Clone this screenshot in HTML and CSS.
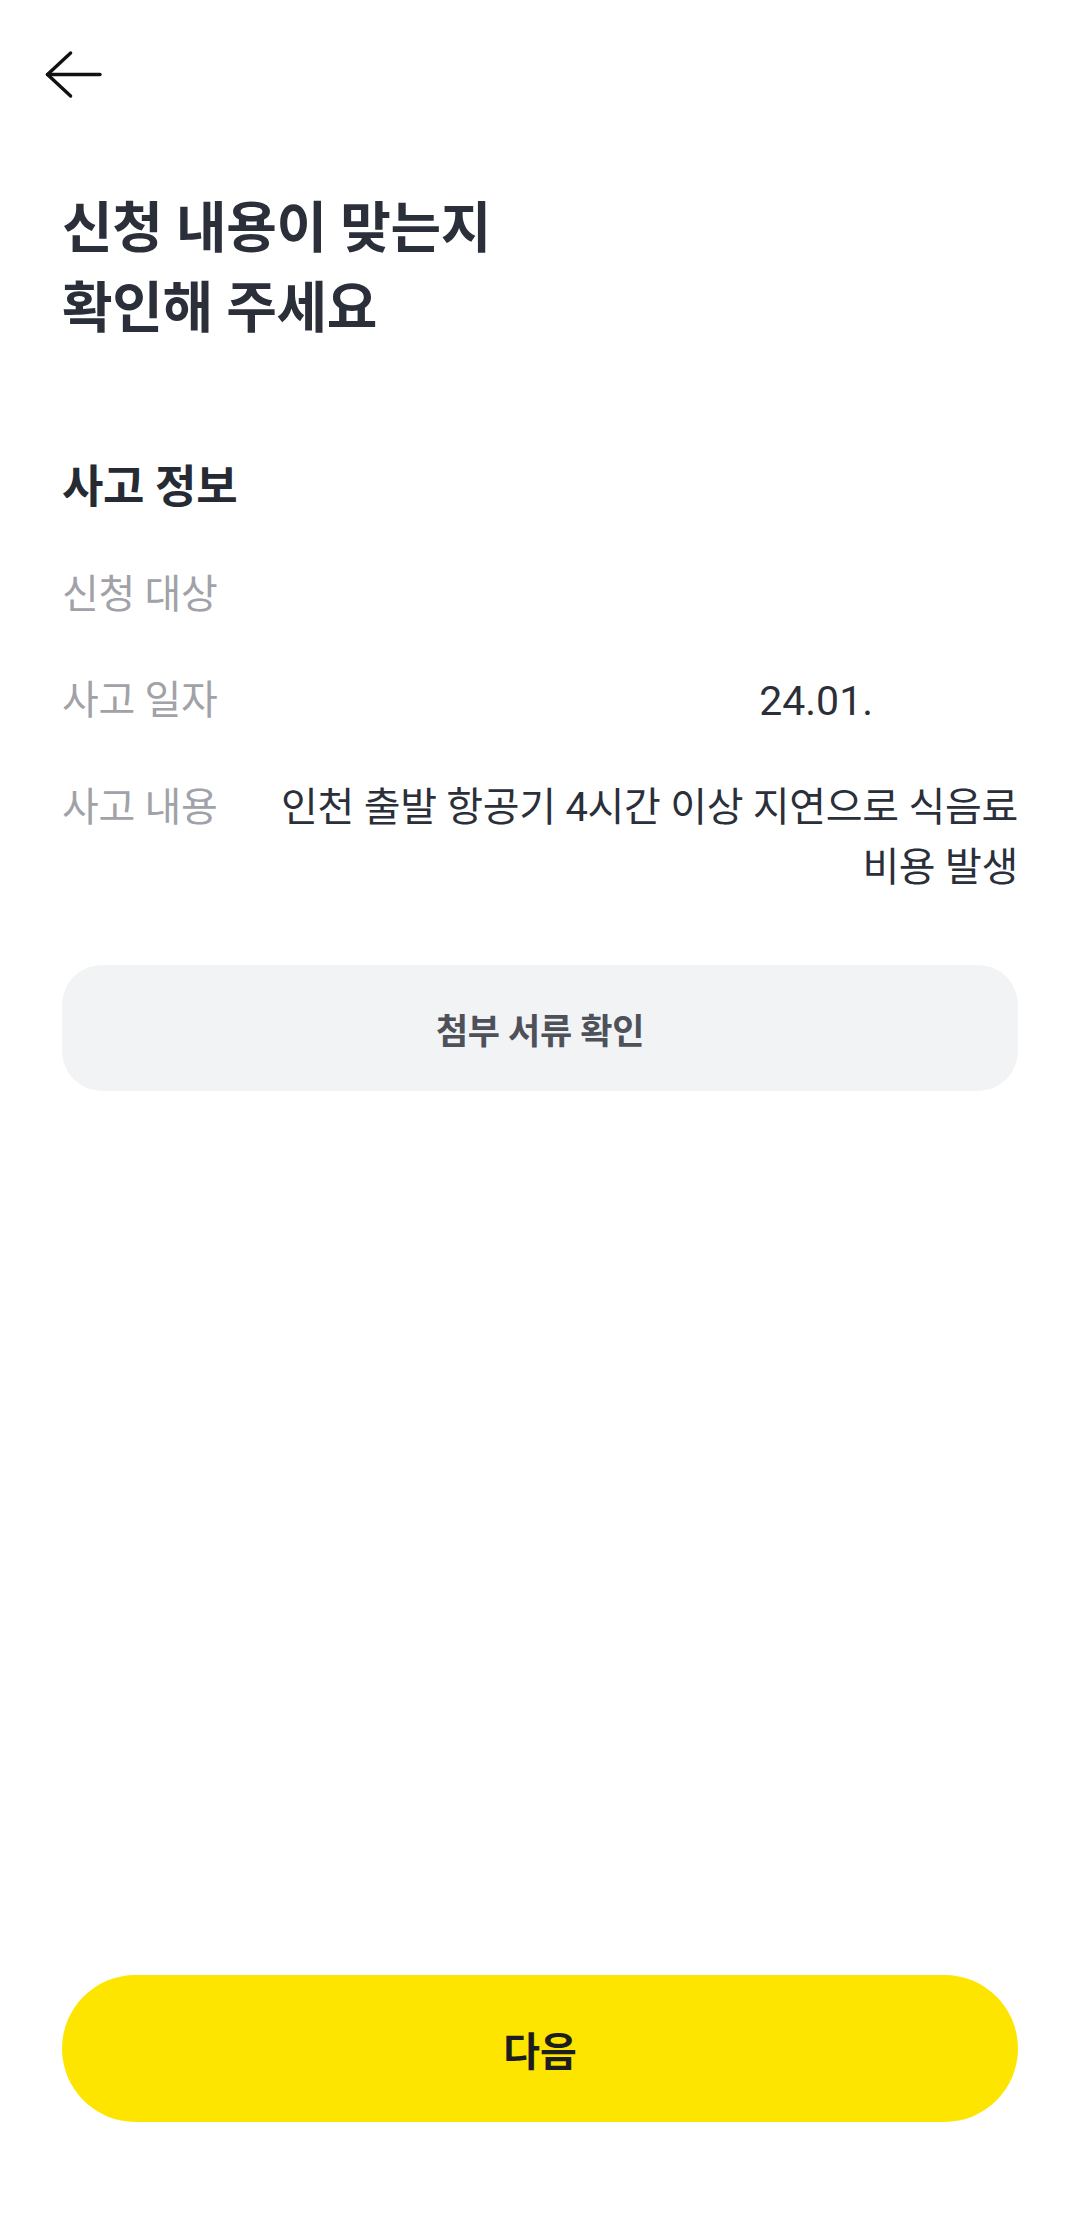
FILE: index.html
```html
<!DOCTYPE html>
<html lang="ko">
<head>
<meta charset="utf-8">
<title>신청 내용 확인</title>
<link rel="stylesheet" href="styles.css">
</head>
<body>
<div class="screen">
  <header class="topbar">
    <button class="back" aria-label="뒤로">
      <svg width="66" height="58" viewBox="0 0 66 58" fill="none" stroke="#111111" stroke-width="3.4" stroke-linecap="round" stroke-linejoin="round">
        <path d="M60 28.5H7.5"/>
        <path d="M30.6 7L7.5 28.5L30.6 50"/>
      </svg>
    </button>
  </header>

  <main class="content">
    <h1 class="title">신청 내용이 맞는지<br>확인해 주세요</h1>

    <section class="info">
      <h2 class="info-heading">사고 정보</h2>
      <dl class="rows">
        <div class="row">
          <dt class="label">신청 대상</dt>
          <dd class="value"></dd>
        </div>
        <div class="row">
          <dt class="label">사고 일자</dt>
          <dd class="value"><span class="date">24.01.</span></dd>
        </div>
        <div class="row">
          <dt class="label">사고 내용</dt>
          <dd class="value">인천 출발 항공기 4시간 이상 지연으로 식음료 비용 발생</dd>
        </div>
      </dl>
      <button class="attach">첨부 서류 확인</button>
    </section>
  </main>

  <footer class="footer">
    <button class="next">다음</button>
  </footer>
</div>
</body>
</html>
```

FILE: styles.css
```css
* { box-sizing: border-box; }

html, body {
  margin: 0;
  padding: 0;
  background: #ffffff;
}

body {
  font-family: Roboto, "Noto Sans CJK KR", sans-serif;
  color: #2b2f3a;
  word-break: keep-all;
}

button {
  font-family: inherit;
  border: 0;
  margin: 0;
  cursor: pointer;
}

.screen {
  min-height: 2221px;
  display: flex;
  flex-direction: column;
}

.topbar {
  padding: 46px 0 0 40px;
  height: 188px;
}

.back {
  display: block;
  width: 66px;
  height: 58px;
  padding: 0;
  background: transparent;
}

.back svg { display: block; }

.content {
  padding: 0 62px;
}

.title {
  margin: 0;
  font-size: 55px;
  font-weight: 700;
  line-height: 80px;
  letter-spacing: -0.3px;
  color: #2b2f3a;
}

.info {
  margin-top: 112px;
}

.info-heading {
  margin: 0;
  font-size: 45px;
  font-weight: 700;
  line-height: 56px;
  letter-spacing: -0.3px;
  color: #262a33;
}

.rows {
  margin: 49px 0 0;
  display: flex;
  flex-direction: column;
  gap: 46px;
}

.row {
  display: flex;
  align-items: flex-start;
  gap: 24px;
  min-height: 60px;
}

.label {
  flex: 0 0 184px;
  margin: 0;
  font-size: 40px;
  line-height: 60px;
  color: #a0a2a8;
  letter-spacing: -0.3px;
  white-space: nowrap;
}

.value {
  flex: 1;
  margin: 0;
  font-size: 40px;
  line-height: 60px;
  text-align: right;
  color: #2b2f3a;
  letter-spacing: -0.3px;
}

.date {
  display: inline-block;
  font-size: 41px;
  padding-right: 145px;
  letter-spacing: 0;
}

.attach {
  display: block;
  width: 100%;
  height: 126px;
  margin-top: 67px;
  border-radius: 40px;
  background: #f2f3f5;
  color: #4e5159;
  font-size: 35px;
  font-weight: 700;
  letter-spacing: -0.3px;
}

.footer {
  margin-top: auto;
  padding: 0 62px 99px;
}

.next {
  display: block;
  width: 100%;
  height: 147px;
  border-radius: 74px;
  background: #fee500;
  color: #1d1d1d;
  font-size: 40px;
  font-weight: 700;
}
```
